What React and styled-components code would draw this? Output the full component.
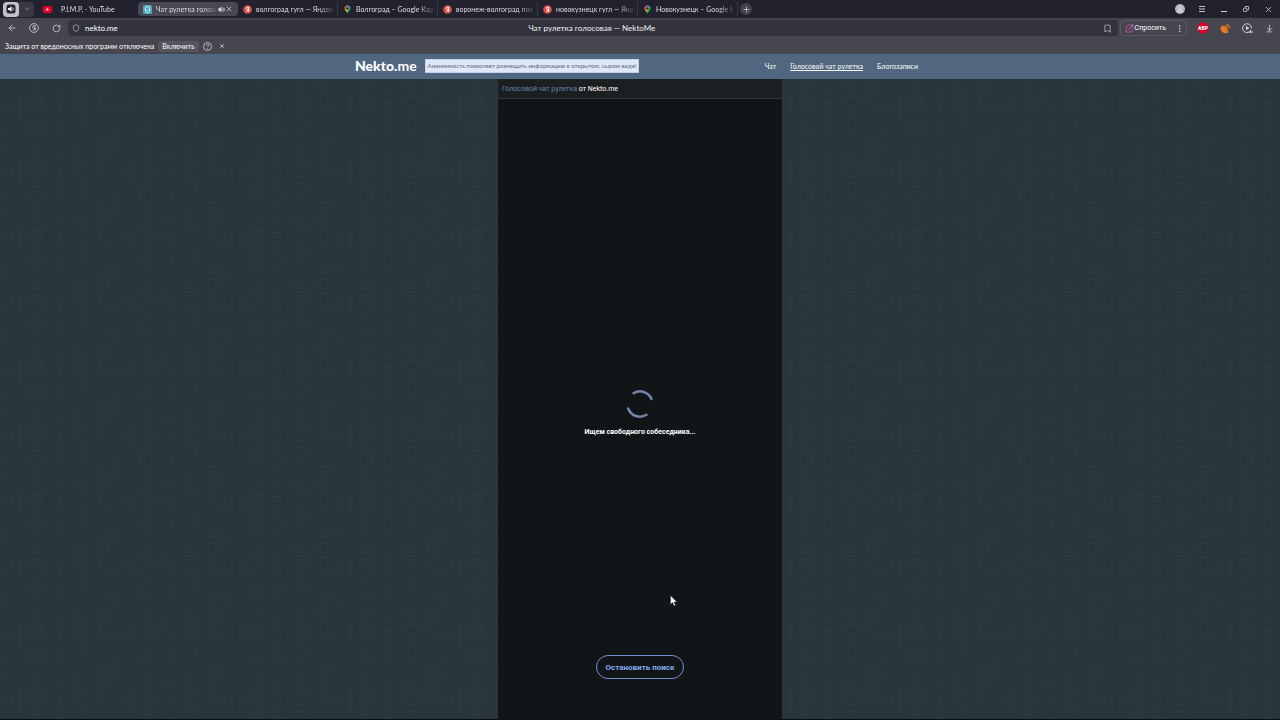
import React from 'react';
import styled, { createGlobalStyle } from 'styled-components';
import {
  ArrowDownToLine,
  ArrowLeft,
  Bookmark,
  ChevronDown,
  EllipsisVertical,
  Plus,
  RotateCw,
  Shield,
  Volume2,
  X,
} from 'lucide-react';

const GlobalStyle = createGlobalStyle`
  * {
    box-sizing: border-box;
  }

  body {
    margin: 0;
    background: #29353c;
    color: #fff;
    font-family: Lato, Roboto, sans-serif;
  }

  button,
  input {
    font-family: inherit;
  }
`;

const PageStyled = styled.div`
  display: flex;
  flex-direction: column;
  min-height: 100vh;
  border-bottom: 1px solid #0c1014;
`;

const IconButton = styled.button`
  display: flex;
  flex: none;
  align-items: center;
  justify-content: center;
  width: ${({ $size }) => $size || 12}px;
  height: ${({ $size }) => $size || 12}px;
  padding: 0;
  border: 0;
  border-radius: 50%;
  background: ${({ $fill }) => $fill || 'transparent'};
  color: #d4d4da;
`;

const TabBar = styled.div`
  display: flex;
  align-items: center;
  height: 18px;
  padding: 0 6px 0 3px;
  background: #22222e;
`;

const TabGroup = styled.div`
  display: flex;
  align-items: center;
  width: 31px;
  height: 15px;
  margin-right: 4px;
  border-radius: 4px;
  background: #383844;
  color: #a0a0ac;
`;

const GroupButton = styled.button`
  display: flex;
  align-items: center;
  justify-content: center;
  width: 16px;
  height: 15px;
  margin-right: 4px;
  padding: 0;
  border: 0;
  border-radius: 4px;
  background: #c2c2c8;
`;

const TabList = styled.div`
  display: flex;
  min-width: 0;
  margin-right: 2px;
`;

const TabStyled = styled.div`
  display: flex;
  align-items: center;
  gap: ${({ $wide }) => ($wide ? '9px' : '4px')};
  width: 100px;
  height: 14px;
  padding: 0 4px 0 5px;
  border-right: 1px solid ${({ $line }) => ($line ? '#393944' : 'transparent')};
  border-radius: ${({ $active }) => ($active ? '4px' : '0')};
  background: ${({ $active }) => ($active ? '#484854' : 'transparent')};
  color: #dcdce2;

  svg {
    flex: none;
  }
`;

const TabTitle = styled.button`
  flex: 1;
  min-width: 0;
  padding: 0;
  overflow: hidden;
  border: 0;
  background: none;
  color: inherit;
  font-size: 7px;
  line-height: 12px;
  text-align: left;
  white-space: nowrap;
  mask-image: linear-gradient(to right, #000 80%, rgba(0, 0, 0, 0.2));
`;

const TabActions = styled.div`
  display: flex;
  margin-left: -3px;
`;

const WindowControls = styled.div`
  display: flex;
  align-items: center;
  gap: 10px;
  margin-left: auto;
`;

const Toolbar = styled.div`
  display: flex;
  align-items: center;
  height: 20px;
  padding: 0 5px 0 6px;
  background: #464650;
`;

const NavButtons = styled.div`
  display: flex;
  gap: 10px;
  margin-right: 6px;
`;

const AddressBar = styled.div`
  display: flex;
  flex: 1;
  align-items: center;
  height: 16px;
  padding: 0 6px 0 4px;
  border-radius: 4px;
  background: #33333e;
  color: #c0c0c8;
`;

const AddressField = styled.label`
  display: flex;
  flex: 1;
  align-items: center;
`;

const AddressInput = styled.input`
  flex: 1;
  min-width: 0;
  padding: 0 0 0 5px;
  border: 0;
  outline: 0;
  background: none;
  color: #fff;
  font-size: 8px;
  line-height: 14px;
`;

const PageTitle = styled.span`
  color: #f0f0f4;
  font-size: 8px;
  line-height: 14px;
`;

const AddressEnd = styled.div`
  display: flex;
  flex: 1;
  justify-content: flex-end;
`;

const AskGroup = styled.div`
  display: flex;
  align-items: center;
  gap: 7px;
  height: 16px;
  margin: 0 10px 0 2px;
  padding: 0 1px 0 4px;
  border: 1px solid #5a5a64;
  border-radius: 4px;
`;

const AskButton = styled.button`
  display: flex;
  align-items: center;
  gap: 1px;
  padding: 0;
  border: 0;
  background: none;
  color: #fff;
  font-family: Roboto, sans-serif;
  font-size: 7px;
  line-height: 12px;
`;

const Extensions = styled.div`
  display: flex;
  gap: 10px;
`;

const Notice = styled.div`
  display: flex;
  align-items: center;
  height: 16px;
  padding: 0 5px;
  background: #464650;
  font-size: 7px;
  line-height: 12px;

  button + button {
    margin-left: 4px;
  }
`;

const NoticeButton = styled.button`
  height: 11px;
  margin-left: 4px;
  padding: 0 4px;
  border: 0;
  border-radius: 2px;
  background: #54545e;
  color: #fff;
  font-size: 7px;
  line-height: 11px;
`;

const SiteHeader = styled.header`
  height: 25px;
  background: #50677f;
`;

const HeaderInner = styled.div`
  display: flex;
  align-items: center;
  max-width: 570px;
  height: 24px;
  margin: 0 auto;
`;

const SiteLogo = styled.a`
  color: #fff;
  font-size: 14px;
  font-weight: 900;
  line-height: 20px;
  text-decoration: none;

  span {
    font-weight: 700;
  }
`;

const Motto = styled.div`
  height: 14px;
  margin-left: 8px;
  padding: 0 2px;
  border: 1px solid #c2d2ea;
  background: #dfe8f8;
  color: #5c6776;
  font-size: 6px;
  line-height: 12px;
  white-space: nowrap;
`;

const SiteNav = styled.nav`
  display: flex;
  gap: 14px;
  margin-left: auto;
  padding-right: 7px;
`;

const NavLink = styled.a`
  color: #fff;
  font-size: 7px;
  line-height: 12px;
  text-decoration: ${({ $active }) => ($active ? 'underline' : 'none')};
`;

const Main = styled.main`
  position: relative;
  display: flex;
  flex: 1;
  flex-direction: column;
`;

const Backdrop = styled.svg`
  position: absolute;
  inset: 0;
  width: 100%;
  height: 100%;
`;

const ChatColumn = styled.section`
  position: relative;
  display: flex;
  flex: 1;
  flex-direction: column;
  width: 100%;
  max-width: 284px;
  margin: 0 auto;
  background: #111518;
  font-family: Roboto, sans-serif;
`;

const ChatTitle = styled.h1`
  margin: 0;
  padding: 4px 4px 2px;
  border-bottom: 1px solid #30383e;
  background: #1b1f22;
  color: #fff;
  font-size: 7px;
  font-weight: 400;
  line-height: 13px;

  a {
    color: #6484aa;
    text-decoration: none;
  }
`;

const SearchStatus = styled.div`
  display: flex;
  flex: 1;
  flex-direction: column;
  align-items: center;
  justify-content: center;
  gap: 8px;
  padding-top: 74px;
`;

const SearchText = styled.p`
  margin: 0;
  font-size: 7px;
  font-weight: 700;
  line-height: 12px;
`;

const ChatFooter = styled.div`
  display: flex;
  justify-content: center;
  padding-bottom: 40px;
`;

const StopButton = styled.button`
  height: 24px;
  padding: 0 9px;
  border: 1px solid #7193d4;
  border-radius: 12px;
  background: transparent;
  color: #82aaf2;
  font-size: 8px;
  font-weight: 700;
`;

const Pointer = styled.svg`
  position: absolute;
  top: 516px;
  left: 172px;
`;

const tabs = [
  { icon: 'youtube', title: 'P.I.M.P. - YouTube', wide: true },
  { icon: 'chat', title: 'Чат рулетка голосо', active: true },
  { icon: 'yandex', title: 'волгоград гугл — Яндекс', line: true },
  { icon: 'maps', title: 'Волгоград – Google Карт', line: true },
  { icon: 'yandex', title: 'воронеж-волгоград поез', line: true },
  { icon: 'yandex', title: 'новокузнецк гугл — Янд', line: true },
  { icon: 'maps', title: 'Новокузнецк – Google К', line: true },
];

function Favicon({ name }) {
  if (name === 'youtube') {
    return (
      <svg width="9" height="9" viewBox="0 0 9 9" aria-hidden="true">
        <rect y="1" width="9" height="7" rx="2" fill="#e8002d" />
        <path d="M3.5 3v3L6 4.5z" fill="#fff" />
      </svg>
    );
  }
  if (name === 'chat') {
    return (
      <svg width="9" height="9" viewBox="0 0 9 9" aria-hidden="true">
        <rect width="9" height="9" rx="1.5" fill="#45a9bf" />
        <path d="M2.3 4.5V3.6a2.2 2.2 0 0 1 4.4 0v.9" fill="none" stroke="#fff" strokeWidth=".8" />
        <path d="M2 4.2h1.2v2H2zM5.8 4.2H7v2H5.8z" fill="#fff" />
        <path d="M3 7.3h3" stroke="#fff" strokeWidth=".8" />
      </svg>
    );
  }
  if (name === 'maps') {
    return (
      <svg width="9" height="9" viewBox="0 0 9 9" aria-hidden="true">
        <path d="M1.5 3.5a3 3 0 0 1 6 0C7.5 5.5 5 6.5 4.5 9 4 6.5 1.5 5.5 1.5 3.5z" fill="#34a853" />
        <path d="M1.5 3.5A3 3 0 0 1 4.5.5v3L2.3 5.5z" fill="#ea4335" />
        <path d="M4.5.5a3 3 0 0 1 2.8 2L4.5 4z" fill="#4285f4" />
        <path d="M4.5 3.5 2.3 5.5 4 7z" fill="#fbbc04" />
        <circle cx="4.5" cy="3.5" r="1.1" fill="#22222e" />
      </svg>
    );
  }
  return (
    <svg width="9" height="9" viewBox="0 0 9 9" aria-hidden="true">
      <circle cx="4.5" cy="4.5" r="4.3" fill="#df4a42" />
      <path d="M5.7 7V2h-1a1.3 1.3 0 0 0 0 2.7h1L3.4 7" fill="none" stroke="#fff" />
    </svg>
  );
}

function Tab({ icon, title, active, line, wide }) {
  return (
    <TabStyled $active={active} $line={line} $wide={wide}>
      <Favicon name={icon} />
      <TabTitle>{title}</TabTitle>
      {active && (
        <TabActions>
          <IconButton $size={8} aria-label="Выключить звук">
            <Volume2 size={7} fill="currentColor" />
          </IconButton>
          <IconButton $size={8} aria-label="Закрыть вкладку">
            <X size={8} />
          </IconButton>
        </TabActions>
      )}
    </TabStyled>
  );
}

function Browser() {
  return (
    <div>
      <TabBar>
        <TabGroup>
          <GroupButton aria-label="Группа вкладок">
            <svg width="10" height="10" viewBox="0 0 10 10">
              <rect x=".5" y=".5" width="9" height="9" rx="2.5" fill="#25252f" />
              <path d="M2 4h1.5l2-1.7v5.4L3.5 6H2z" fill="#fff" />
              <path d="M6.7 3.5q1.2 1.5 0 3" fill="none" stroke="#fff" strokeWidth=".8" />
            </svg>
          </GroupButton>
          <ChevronDown size={8} />
        </TabGroup>
        <TabList>
          {tabs.map((tab) => (
            <Tab key={tab.title} {...tab} />
          ))}
        </TabList>
        <IconButton $fill="#42424e" aria-label="Новая вкладка">
          <Plus size={9} />
        </IconButton>
        <WindowControls>
          <IconButton aria-label="Профиль">
            <svg width="10" height="10" viewBox="0 0 10 10">
              <circle cx="5" cy="5" r="5" fill="#b4b4c0" />
              <circle cx="5" cy="3.8" r="1.5" fill="none" stroke="#e8e8ee" strokeWidth=".7" />
              <path d="M2.5 7.8q0-2 2.5-2t2.5 2z" fill="none" stroke="#e8e8ee" strokeWidth=".7" />
            </svg>
          </IconButton>
          <IconButton aria-label="Меню">
            <svg width="6" height="6" viewBox="0 0 6 6">
              <path d="M0 .5h6M0 3h6M0 5.5h6" stroke="currentColor" strokeWidth=".9" />
            </svg>
          </IconButton>
          <IconButton aria-label="Свернуть">
            <svg width="6" height="8" viewBox="0 0 6 8">
              <path d="M0 6.5h6" stroke="currentColor" />
            </svg>
          </IconButton>
          <IconButton aria-label="Восстановить">
            <svg width="6" height="6" viewBox="0 0 7 7" fill="none" stroke="currentColor">
              <rect x=".5" y="2.5" width="4" height="4" rx="1" />
              <path d="M2.5 2V.5h4v4H5" />
            </svg>
          </IconButton>
          <IconButton aria-label="Закрыть">
            <X size={9} />
          </IconButton>
        </WindowControls>
      </TabBar>
      <Toolbar>
        <NavButtons>
          <IconButton aria-label="Назад">
            <ArrowLeft size={10} />
          </IconButton>
          <IconButton aria-label="Яндекс">
            <svg width="10" height="10" viewBox="0 0 10 10" fill="none" stroke="currentColor" strokeWidth=".8">
              <circle cx="5" cy="5" r="4.4" />
              <path d="M6.2 7.7V2.5h-1a1.4 1.4 0 0 0 0 2.9h1L4 7.7" />
            </svg>
          </IconButton>
          <IconButton aria-label="Обновить">
            <RotateCw size={9} />
          </IconButton>
        </NavButtons>
        <AddressBar>
          <AddressField>
            <Shield size={8} />
            <AddressInput aria-label="Адрес" defaultValue="nekto.me" />
          </AddressField>
          <PageTitle>Чат рулетка голосовая — NektoMe</PageTitle>
          <AddressEnd>
            <Bookmark size={9} />
          </AddressEnd>
        </AddressBar>
        <AskGroup>
          <AskButton>
            <svg width="9" height="9" viewBox="0 0 9 9" fill="none" stroke="#d94ba8">
              <path d="M5.5 1A3.6 3.6 0 0 0 1.3 6L1 8h2.5A3.6 3.6 0 0 0 8 4" strokeWidth=".9" />
              <path d="M3.5 5.5 7.5 1.5M6 1h2v2" stroke="#e06bb9" strokeWidth=".9" />
            </svg>
            Спросить
          </AskButton>
          <IconButton aria-label="Ещё">
            <EllipsisVertical size={9} />
          </IconButton>
        </AskGroup>
        <Extensions>
          <IconButton aria-label="Блокировщик рекламы">
            <svg width="12" height="12" viewBox="0 0 12 12">
              <path d="M3.7.5h4.6l3.2 3.2v4.6l-3.2 3.2H3.7L.5 8.3V3.7z" fill="#d8002c" />
              <text x="6" y="7.8" fill="#fff" fontFamily="Roboto" fontSize="5" fontWeight="900" textAnchor="middle">
                ABP
              </text>
            </svg>
          </IconButton>
          <IconButton aria-label="Расширение">
            <svg width="11" height="11" viewBox="0 0 11 11">
              <path d="M2 2.5 8.5 9A4.6 4.6 0 0 1 2 8.8 4.6 4.6 0 0 1 2 2.5z" fill="#ea7a1c" />
              <path d="M2 2.5Q5.5 2.5 6.8 4.2T8.500 9z" fill="#ea7a1c" />
              <path d="M5.5 5.5 8 3M6 .8l.5 1.500M8 1l-.2 2.200h2.400M8.800 4.800l1.600.4" stroke="#ea7a1c" fill="none" />
            </svg>
          </IconButton>
          <IconButton aria-label="Плеер">
            <svg width="11" height="11" viewBox="0 0 11 11">
              <path d="M6.5 9.3A4.4 4.4 0 1 1 9.400 5.500" fill="none" stroke="currentColor" />
              <path d="M4 3v4.200L7.400 5z" fill="currentColor" />
              <path d="M7 10V8M8.500 10V7M10 10V8" stroke="currentColor" />
            </svg>
          </IconButton>
          <IconButton aria-label="Загрузки">
            <ArrowDownToLine size={9} />
          </IconButton>
        </Extensions>
      </Toolbar>
      <Notice>
        Защита от вредоносных программ отключена
        <NoticeButton>Включить</NoticeButton>
        <IconButton $size={10} aria-label="Справка">
          <svg width="9" height="9" viewBox="0 0 9 9" fill="none" stroke="currentColor" strokeWidth=".8">
            <circle cx="4.5" cy="4.5" r="4" />
            <path d="M3.3 3.6q0-1.3 1.2-1.3t1.2 1.2q0 .7-1.2 1.300M4.500 6v.8" />
          </svg>
        </IconButton>
        <IconButton $size={10} aria-label="Скрыть">
          <X size={6} strokeWidth={3} />
        </IconButton>
      </Notice>
    </div>
  );
}

function Texture() {
  return (
    <Backdrop aria-hidden="true">
      <defs>
        <pattern id="squares" width="110" height="66" patternUnits="userSpaceOnUse">
          <g fill="none" stroke="#3a484a">
            <path d="M19.5 17v22M21.5 17v20M11.5 18v14H0M0 28.5h8M0 54.5h9v11H0M0 58.5h6" />
            <path d="M29.5 17.5h14v14h-14zM32.5 20.5h8v8h-8zM30.5 42.5h11v13h-11zM32 46.5h8" />
            <path d="M51.5 21.5h9v13h-9M54.5 24.5h7M52.5 43.5h9v12h-9M29 3.5h12v8H29M50 11.5h12V2" />
            <path d="M73 15.5h17M74.5 4.5h8v7h-8zM75 18.5h14M76.5 38.5h9v12h-9" />
            <path d="M100.5 15.5h10v15h-10zM97 58.5h13M97 62.5h11M98.5 2.5h9v9h-9z" />
            <ellipse cx="82" cy="26" rx="8" ry="6" />
          </g>
        </pattern>
      </defs>
      <rect width="100%" height="100%" fill="#29353c" />
      <rect width="100%" height="100%" fill="url(#squares)" opacity=".25" />
    </Backdrop>
  );
}

export default function App() {
  return (
    <PageStyled>
      <GlobalStyle />
      <Browser />
      <SiteHeader>
        <HeaderInner>
          <SiteLogo href="#">
            Nekto.<span>me</span>
          </SiteLogo>
          <Motto>Анонимность позволяет размещать информацию в открытом, сыром виде!</Motto>
          <SiteNav>
            <NavLink href="#">Чат</NavLink>
            <NavLink href="#" $active>
              Голосовой чат рулетка
            </NavLink>
            <NavLink href="#">Блогозаписи</NavLink>
          </SiteNav>
        </HeaderInner>
      </SiteHeader>
      <Main>
        <Texture />
        <ChatColumn>
          <ChatTitle>
            <a href="#">Голосовой чат рулетка</a> от Nekto.me
          </ChatTitle>
          <SearchStatus>
            <svg width="28" height="28" viewBox="0 0 28 28" fill="none" stroke="#7187aa" strokeWidth="2.5">
              <path d="M7.5 3.2A12.5 12.5 0 0 1 25.5 9" strokeLinecap="round" />
              <path d="M2.2 18.5A12.5 12.5 0 0 0 20.5 24.8" strokeLinecap="round" />
            </svg>
            <SearchText>Ищем свободного собеседника...</SearchText>
          </SearchStatus>
          <ChatFooter>
            <StopButton>Остановить поиск</StopButton>
          </ChatFooter>
          <Pointer width="8" height="12" viewBox="0 0 8 12" aria-hidden="true">
            <path d="M.5.5v9l2-2 1.5 3.5 1.5-.7L4 7h3z" fill="#fff" stroke="#22262a" strokeWidth=".5" />
          </Pointer>
        </ChatColumn>
      </Main>
    </PageStyled>
  );
}
